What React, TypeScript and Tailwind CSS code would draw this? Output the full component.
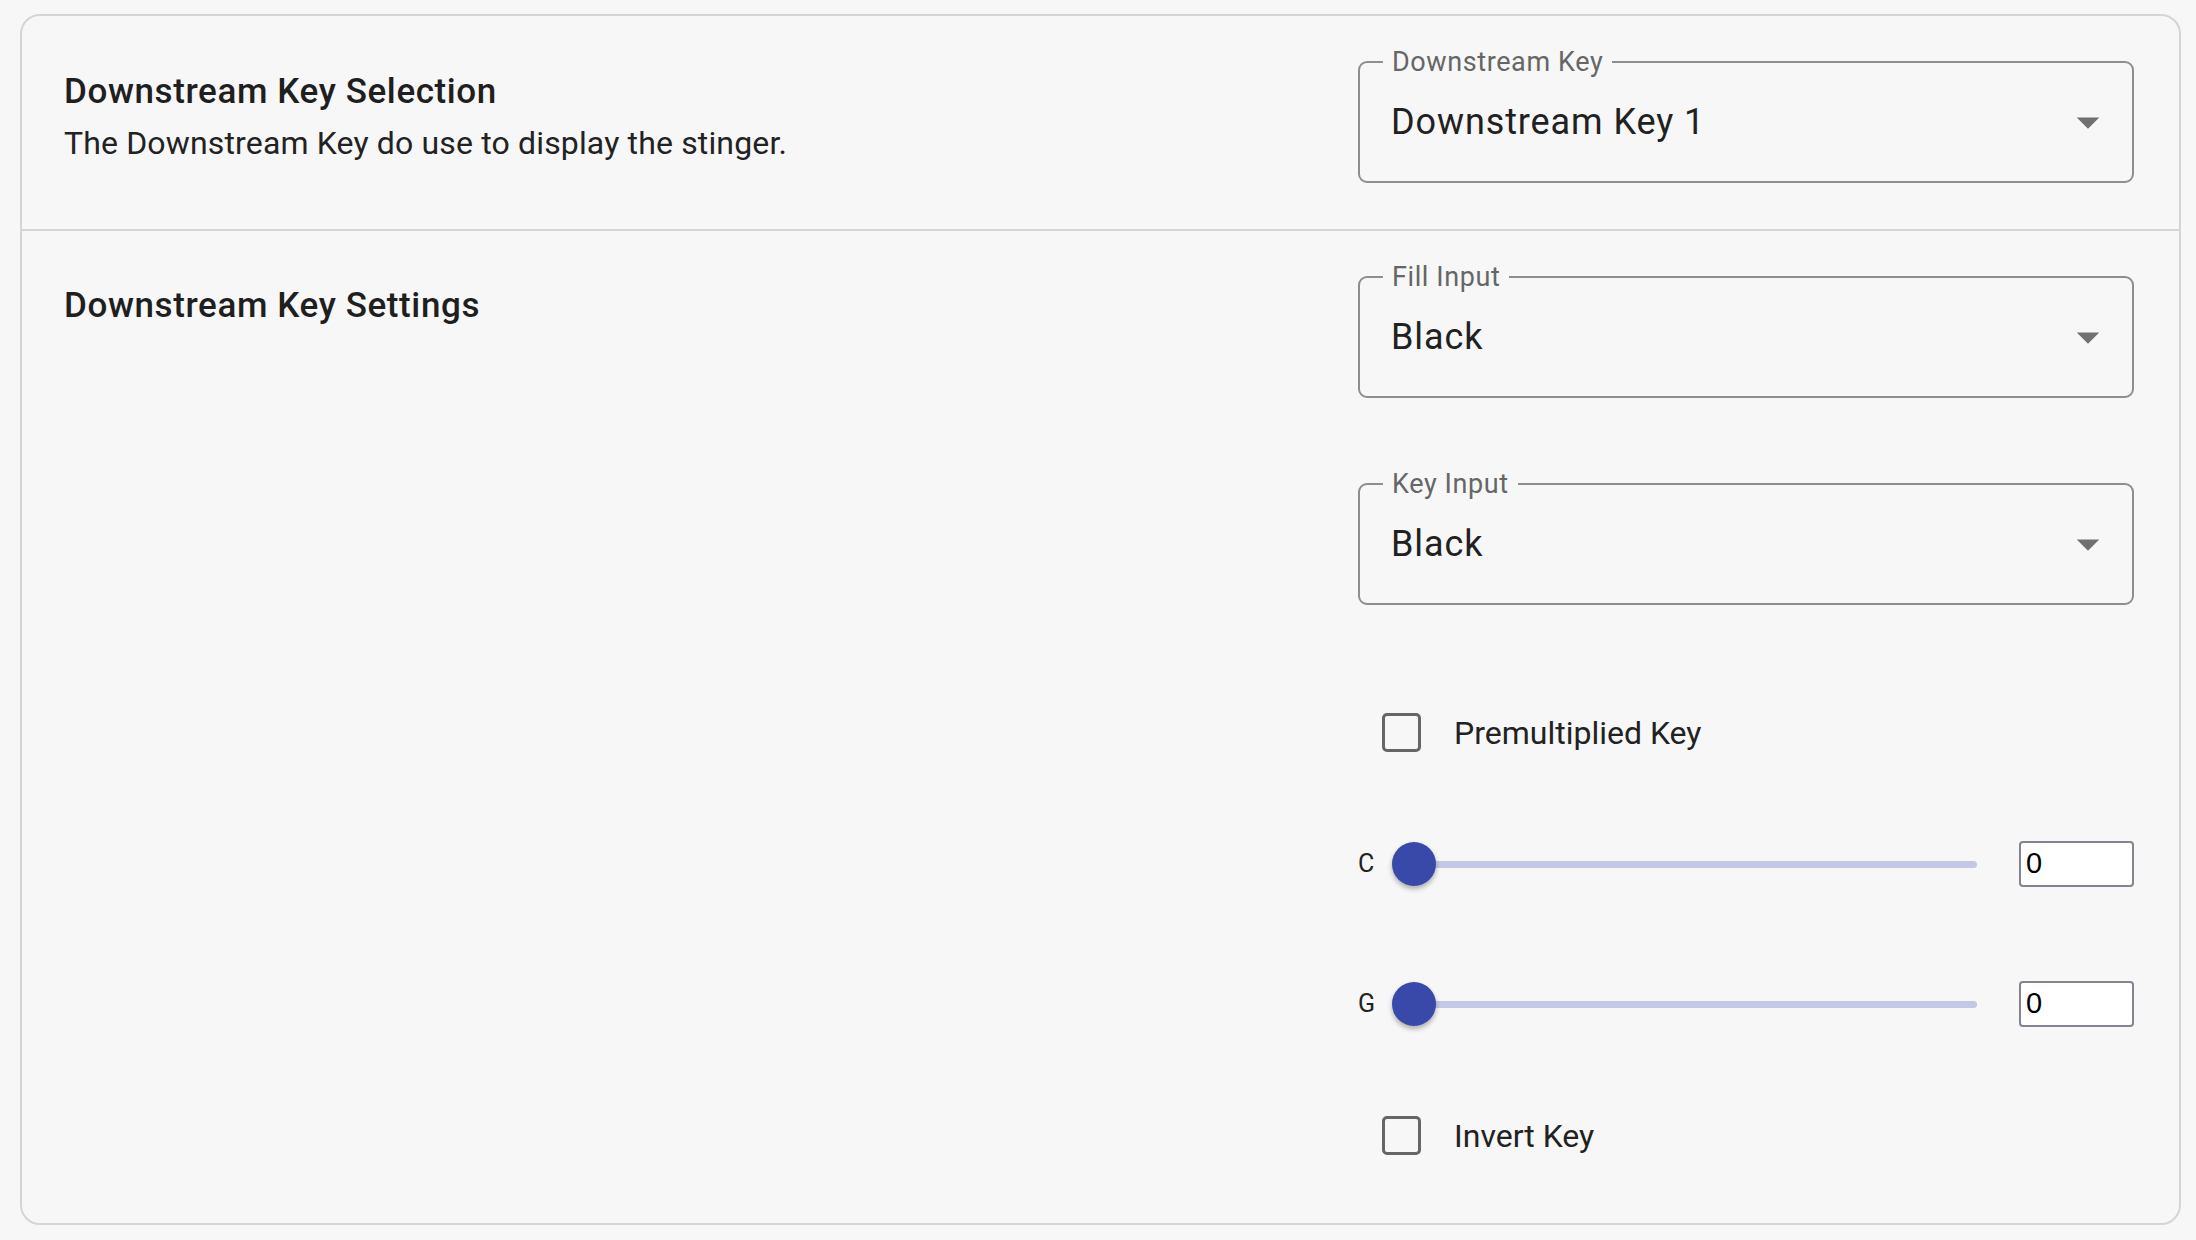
import React from 'react';

function SelectField({ label, value }: { label: string; value: string }) {
  return (
    <div className="relative flex h-[122px] items-center rounded-[9px] border-2 border-[#8e8e8e] pl-[31px] pr-[17px]">
      <span className="absolute left-[23px] top-[-1px] -translate-y-1/2 bg-[#f7f7f7] px-[9px] text-[27px] leading-[30px] tracking-[0.6px] text-[#666666]">
        {label}
      </span>
      <span className="flex-1 text-[36px] leading-[40px] tracking-[0.9px] text-[#212121]">{value}</span>
      <svg width="54" height="54" viewBox="0 0 24 24">
        <path d="M7 10l5 5 5-5z" fill="#707070" />
      </svg>
    </div>
  );
}

function CheckRow({ label, className }: { label: string; className: string }) {
  return (
    <div className={`flex h-[39px] items-center pl-[24px] ${className}`}>
      <span className="h-[39px] w-[39px] rounded-[5px] border-[3.5px] border-[#666666]" />
      <span className="ml-[33px] text-[32px] leading-[40px] text-[#222222]">{label}</span>
    </div>
  );
}

function SliderRow({ label, className }: { label: string; className: string }) {
  return (
    <div className={`flex h-[46px] items-center ${className}`}>
      <span className="w-[56px] text-[25px] leading-[30px] text-[#222222]">{label}</span>
      <div className="relative h-[7px] flex-1 rounded-full bg-[#c4c8e5]">
        <span className="absolute left-0 top-1/2 h-[44px] w-[44px] -translate-x-1/2 -translate-y-1/2 rounded-full bg-[#3949a9] shadow-[0_3px_5px_rgba(0,0,0,0.3)]" />
      </div>
      <div className="ml-[42px] flex h-[46px] w-[115px] items-center rounded-[4px] border-2 border-[#858390] bg-white pl-[5px] font-['Liberation_Sans',sans-serif] text-[29px] text-black">
        0
      </div>
    </div>
  );
}

export default function App() {
  return (
    <div className="min-h-screen bg-[#f7f7f7] pb-[15px] pl-[20px] pr-[15px] pt-[14px] font-[Roboto,sans-serif]">
      <div className="rounded-[20px] border-2 border-[#d5d5d5]">
        <section className="flex justify-between pb-[46px] pl-[42px] pr-[45px] pt-[45px]">
          <div className="pt-[11px]">
            <h2 className="text-[35px] font-medium leading-[40px] tracking-[0.6px] text-[#1f1f1f]">
              Downstream Key Selection
            </h2>
            <p className="mt-[8px] text-[32px] leading-[46px] tracking-[0.15px] text-[#222222]">
              The Downstream Key do use to display the stinger.
            </p>
          </div>
          <div className="w-[776px]">
            <SelectField label="Downstream Key" value="Downstream Key 1" />
          </div>
        </section>

        <div className="h-[2px] bg-[#d5d5d5]" />

        <section className="flex justify-between pb-[68px] pl-[42px] pr-[45px] pt-[45px]">
          <div className="pt-[10px]">
            <h2 className="text-[35px] font-medium leading-[40px] tracking-[0.6px] text-[#1f1f1f]">
              Downstream Key Settings
            </h2>
          </div>
          <div className="w-[776px]">
            <SelectField label="Fill Input" value="Black" />
            <div className="mt-[85px]">
              <SelectField label="Key Input" value="Black" />
            </div>
            <CheckRow label="Premultiplied Key" className="mt-[108px]" />
            <SliderRow label="C" className="mt-[89px]" />
            <SliderRow label="G" className="mt-[94px]" />
            <CheckRow label="Invert Key" className="mt-[89px]" />
          </div>
        </section>
      </div>
    </div>
  );
}
